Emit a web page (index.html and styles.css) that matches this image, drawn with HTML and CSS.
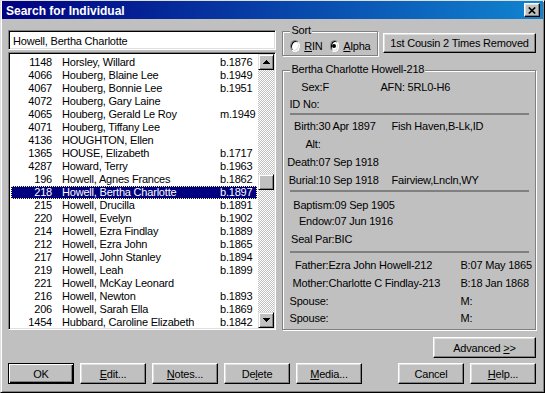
FILE: index.html
```html
<!DOCTYPE html>
<html lang="en">
<head>
    <meta charset="UTF-8">
    <title>Search for Individual</title>
    <link rel="stylesheet" href="styles.css">
</head>
<body>

<div class="window">
  <div class="titlebar">
    <span class="title">Search for Individual</span>
    <span class="close-btn">
      <svg width="8" height="7" viewBox="0 0 8 7"><path d="M0.8 0.5 L7.2 6.5 M7.2 0.5 L0.8 6.5" stroke="#000" stroke-width="1.7"/></svg>
    </span>
  </div>

  <div class="content">
    <div class="main">

      <div class="left-col">
        <div class="name-input">Howell, Bertha Charlotte</div>
        <div class="listbox">
          <div class="items">
            <div class="row"><span class="num">1148</span><span class="nm">Horsley, Willard</span><span class="dt">b.1876</span></div>
            <div class="row"><span class="num">4066</span><span class="nm">Houberg, Blaine Lee</span><span class="dt">b.1949</span></div>
            <div class="row"><span class="num">4067</span><span class="nm">Houberg, Bonnie Lee</span><span class="dt">b.1951</span></div>
            <div class="row"><span class="num">4072</span><span class="nm">Houberg, Gary Laine</span><span class="dt"></span></div>
            <div class="row"><span class="num">4065</span><span class="nm">Houberg, Gerald Le Roy</span><span class="dt">m.1949</span></div>
            <div class="row"><span class="num">4071</span><span class="nm">Houberg, Tiffany Lee</span><span class="dt"></span></div>
            <div class="row"><span class="num">4136</span><span class="nm">HOUGHTON, Ellen</span><span class="dt"></span></div>
            <div class="row"><span class="num">1365</span><span class="nm">HOUSE, Elizabeth</span><span class="dt">b.1717</span></div>
            <div class="row"><span class="num">4287</span><span class="nm">Howard, Terry</span><span class="dt">b.1963</span></div>
            <div class="row"><span class="num">196</span><span class="nm">Howell, Agnes Frances</span><span class="dt">b.1862</span></div>
            <div class="row selected"><span class="num">218</span><span class="nm">Howell, Bertha Charlotte</span><span class="dt">b.1897</span></div>
            <div class="row"><span class="num">215</span><span class="nm">Howell, Drucilla</span><span class="dt">b.1891</span></div>
            <div class="row"><span class="num">220</span><span class="nm">Howell, Evelyn</span><span class="dt">b.1902</span></div>
            <div class="row"><span class="num">214</span><span class="nm">Howell, Ezra Findlay</span><span class="dt">b.1889</span></div>
            <div class="row"><span class="num">212</span><span class="nm">Howell, Ezra John</span><span class="dt">b.1865</span></div>
            <div class="row"><span class="num">217</span><span class="nm">Howell, John Stanley</span><span class="dt">b.1894</span></div>
            <div class="row"><span class="num">219</span><span class="nm">Howell, Leah</span><span class="dt">b.1899</span></div>
            <div class="row"><span class="num">221</span><span class="nm">Howell, McKay Leonard</span><span class="dt"></span></div>
            <div class="row"><span class="num">216</span><span class="nm">Howell, Newton</span><span class="dt">b.1893</span></div>
            <div class="row"><span class="num">206</span><span class="nm">Howell, Sarah Ella</span><span class="dt">b.1869</span></div>
            <div class="row"><span class="num">1454</span><span class="nm">Hubbard, Caroline Elizabeth</span><span class="dt">b.1842</span></div>
          </div>
          <div class="scrollbar">
            <div class="scroll-btn">
              <svg width="7" height="4" viewBox="0 0 7 4"><path d="M3 0h1v1h1v1h1v1h1v1H0V3h1V2h1V1h1z"/></svg>
            </div>
            <div class="track"><div class="thumb"></div></div>
            <div class="scroll-btn">
              <svg width="7" height="4" viewBox="0 0 7 4"><path d="M0 0h7v1H6v1H5v1H4v1H3V3H2V2H1V1H0z"/></svg>
            </div>
          </div>
        </div>
      </div>

      <div class="right-col">
        <div class="top-row">
          <div class="group sort">
            <span class="group-label">Sort</span>
            <span class="radio"></span><span class="radio-text"><u>R</u>IN</span>
            <span class="radio checked"></span><span class="radio-text"><u>A</u>lpha</span>
          </div>
          <div class="btn cousin">1st Cousin 2 Times Removed</div>
        </div>

        <div class="group info">
          <span class="group-label">Bertha Charlotte Howell-218</span>
          <div class="section head">
            <div class="irow sex-row"><span class="lbl">Sex:</span><span class="val">F</span><span>AFN: 5RL0-H6</span></div>
            <div class="irow id-row">ID No:</div>
          </div>
          <div class="sep"></div>
          <div class="section vital">
            <div class="irow"><span class="lbl">Birth:</span><span class="val">30 Apr 1897</span><span>Fish Haven,B-Lk,ID</span></div>
            <div class="irow"><span class="lbl alt">Alt:</span></div>
            <div class="irow"><span class="lbl">Death:</span><span class="val">07 Sep 1918</span></div>
            <div class="irow"><span class="lbl">Burial:</span><span class="val">10 Sep 1918</span><span>Fairview,Lncln,WY</span></div>
          </div>
          <div class="sep sep-lds"></div>
          <div class="section lds">
            <div class="irow"><span class="lbl">Baptism:</span><span>09 Sep 1905</span></div>
            <div class="irow"><span class="lbl">Endow:</span><span>07 Jun 1916</span></div>
            <div class="irow seal"><span class="lbl">Seal Par:</span><span>BIC</span></div>
          </div>
          <div class="sep sep-family"></div>
          <div class="section family">
            <div class="irow"><span class="lbl">Father:</span><span class="val">Ezra John Howell-212</span><span>B:07 May 1865</span></div>
            <div class="irow"><span class="lbl">Mother:</span><span class="val">Charlotte C Findlay-213</span><span>B:18 Jan 1868</span></div>
            <div class="irow"><span class="lbl">Spouse:</span><span class="val"></span><span>M:</span></div>
            <div class="irow last"><span class="lbl">Spouse:</span><span class="val"></span><span>M:</span></div>
          </div>
        </div>

        <div class="adv-row">
          <div class="btn adv">Advanced&nbsp;<u>&gt;</u>&gt;</div>
        </div>
      </div>
    </div>

    <div class="buttons">
      <div class="btn default">OK</div>
      <div class="btn"><u>E</u>dit...</div>
      <div class="btn"><u>N</u>otes...</div>
      <div class="btn">De<u>l</u>ete</div>
      <div class="btn"><u>M</u>edia...</div>
      <div class="btn cancel">Cancel</div>
      <div class="btn"><u>H</u>elp...</div>
    </div>
  </div>
</div>

</body>
</html>
```

FILE: styles.css
```css
* {box-sizing: border-box;}

body {
  margin: 0;
  background-color: #c0c0c0;
  font-family: "Liberation Sans", Arial, sans-serif;
  font-size: 11px;
  letter-spacing: -0.2px;
  color: #000;
}

u {text-decoration: underline; text-underline-offset: 1px;}

.window {
  width: 545px;
  height: 393px;
  padding: 0 1px 1px 1px;
  background-color: #c0c0c0;
  border: 1px solid;
  border-color: #dfdfdf #000 #000 #dfdfdf;
  box-shadow: inset 1px 1px #fff, inset -1px -1px #808080;
}

.titlebar {
  height: 18px;
  display: flex;
  align-items: center;
  justify-content: space-between;
  padding: 0 3px 0 4px;
  background: linear-gradient(to right, #000080, #1084d0);
}

.title {
  color: #fff;
  font-weight: bold;
  font-size: 12px;
  letter-spacing: 0;
  padding-top: 2px;
}

.close-btn {
  width: 16px;
  height: 14px;
  display: flex;
  align-items: center;
  justify-content: center;
  background-color: #c0c0c0;
  border: 1px solid;
  border-color: #fff #000 #000 #fff;
  box-shadow: inset -1px -1px #808080, inset 1px 1px #dfdfdf;
}

.content {
  padding: 8px 7px 0 6px;
}

.main {
  display: flex;
  gap: 6px;
  height: 331px;
}

/* left side: name box + list */
.left-col {
  width: 269px;
  padding-top: 3px;
}

.name-input {
  height: 20px;
  padding: 2px 2px 0 4px;
  line-height: 16px;
  background-color: #fff;
  border: 1px solid;
  border-color: #808080 #fff #fff #808080;
  box-shadow: inset 1px 1px #000, inset -1px -1px #dfdfdf;
}

.listbox {
  margin-top: 2px;
  height: 278px;
  display: flex;
  padding: 1px;
  background-color: #fff;
  border: 1px solid;
  border-color: #808080 #fff #fff #808080;
  box-shadow: inset 1px 1px #000, inset -1px -1px #dfdfdf;
}

.items {
  flex: 1;
  padding-top: 2px;
  background-color: #fff;
}

.row {
  display: flex;
  height: 13px;
  line-height: 13px;
  margin: 0 1px;
  white-space: nowrap;
}

.row .num {width: 41px; text-align: right;}
.row .nm {width: 158px; margin-left: 10px;}

.row.selected {
  background-color: #000080;
  color: #fff;
  outline: 1px dotted #ffff80;
  outline-offset: -1px;
}

.scrollbar {
  width: 16px;
  display: flex;
  flex-direction: column;
}

.scroll-btn, .thumb {
  height: 16px;
  display: flex;
  align-items: center;
  justify-content: center;
  background-color: #c0c0c0;
  border: 1px solid;
  border-color: #dfdfdf #000 #000 #dfdfdf;
  box-shadow: inset 1px 1px #fff, inset -1px -1px #808080;
}

.track {
  flex: 1;
  background: #fff repeating-conic-gradient(#c0c0c0 0 25%, #fff 0 50%) 0 0 / 2px 2px;
}

.thumb {margin-top: 104px;}

/* right side */
.right-col {
  width: 254px;
  display: flex;
  flex-direction: column;
}

.top-row {
  height: 29px;
  display: flex;
  justify-content: space-between;
  align-items: flex-start;
}

.group {
  position: relative;
  border: 1px solid #808080;
  box-shadow: inset 1px 1px #fff, 1px 1px #fff;
}

.group-label {
  position: absolute;
  top: -8px;
  left: 7px;
  padding: 0 1px;
  line-height: 13px;
  background-color: #c0c0c0;
  white-space: nowrap;
}

.sort {
  margin-top: 4px;
  width: 96px;
  height: 25px;
  display: flex;
  align-items: center;
  padding: 5px 0 0 7px;
}

.radio {
  width: 12px;
  height: 12px;
  border-radius: 50%;
  display: flex;
  align-items: center;
  justify-content: center;
  background-color: #fff;
  border: 1px solid;
  border-color: #808080 #fff #fff #808080;
  box-shadow: inset 1px 1px #000, inset -1px -1px #dfdfdf;
}

.radio.checked::after {
  content: "";
  width: 4px;
  height: 4px;
  border-radius: 50%;
  background-color: #000;
}

.radio-text {margin: 0 7px 0 4px;}

.btn {
  width: 66px;
  height: 21px;
  display: flex;
  align-items: center;
  justify-content: center;
  background-color: #c0c0c0;
  white-space: nowrap;
  border: 1px solid;
  border-color: #fff #000 #000 #fff;
  box-shadow: inset -1px -1px #808080, inset 1px 1px #dfdfdf;
}

.btn.default {
  border-color: #000;
  box-shadow: inset 1px 1px #fff, inset -1px -1px #000, inset -2px -2px #808080;
}

.cousin {
  margin-top: 6px;
  width: 153px;
  height: 20px;
}

.info {
  margin-top: 14px;
  height: 260px;
  padding: 7px 0 0 1px;
}

.irow {
  display: flex;
  height: 18px;
  line-height: 18px;
  white-space: nowrap;
}

.lbl {text-align: right; flex-shrink: 0;}

.sex-row .lbl {width: 38px;}
.sex-row .val {width: 58px;}
.id-row {height: 17px; line-height: 17px; padding-left: 5px;}

.sep {
  height: 2px;
  width: 239px;
  margin-left: 6px;
  background-color: #808080;
}

.vital {margin-top: 2px;}
.vital .lbl {width: 34px;}
.vital .lbl.alt {width: 36px;}
.vital .val {width: 73px;}

.sep-lds {margin-top: 1px;}

.lds {margin-top: 5px;}
.lds .irow {height: 16px; line-height: 16px;}
.lds .irow.seal {height: 20px; line-height: 20px;}
.lds .lbl {width: 50px;}

.sep-family {margin-top: 2px;}

.family {margin-top: 3px;}
.family .lbl {width: 44px;}
.family .val {width: 132px;}
.family .irow.last {height: 17px; line-height: 17px;}

.adv-row {
  margin-top: 7px;
  display: flex;
  justify-content: flex-end;
}

.adv {width: 103px;}

.buttons {
  margin-top: 5px;
  display: flex;
  gap: 6px;
}

.cancel {margin-left: auto;}
```
